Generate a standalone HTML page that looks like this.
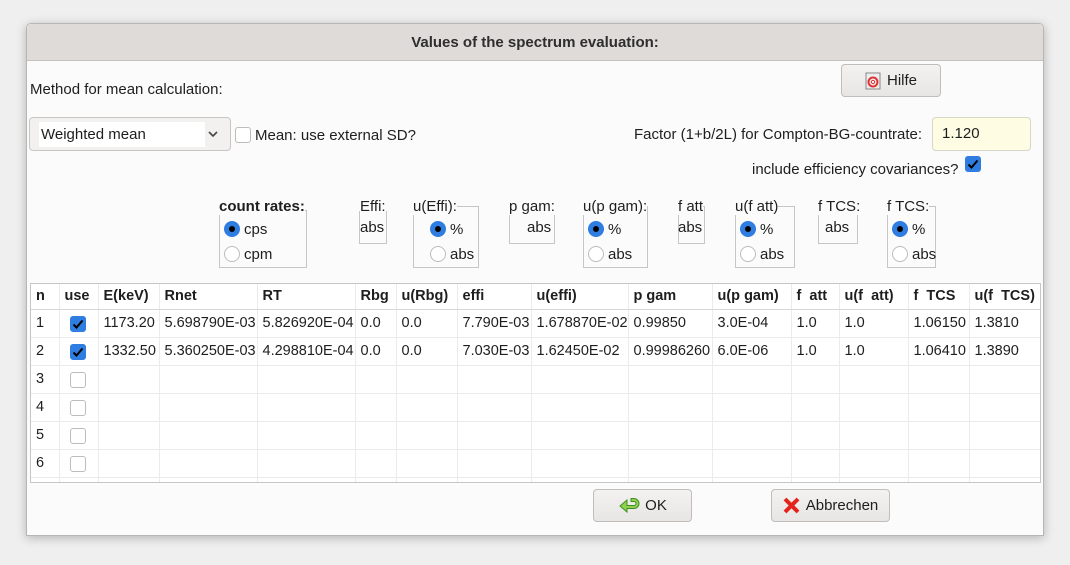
<!DOCTYPE html>
<html><head><meta charset="utf-8"><style>
*{box-sizing:border-box;margin:0;padding:0}
body{width:1070px;height:565px;background:#efefef;font-family:"Liberation Sans","DejaVu Sans",sans-serif;font-size:15px;color:#1e1e1e;position:relative;overflow:hidden}
.a{position:absolute;white-space:nowrap}
#dlg{position:absolute;left:26px;top:23px;width:1018px;height:513px;background:#fbfbfb;border:1px solid #b8b5b2;box-shadow:0 2px 10px rgba(0,0,0,.25);border-radius:5px 5px 0 0}
#title{position:absolute;left:0;top:0;width:100%;height:37px;background:#dedbd8;border-bottom:1px solid #c4c1be;border-radius:5px 5px 0 0;text-align:center;line-height:37px;font-weight:bold;color:#2e2e2e}
.btn{position:absolute;background:linear-gradient(#f3f2f1,#e8e6e4);border:1px solid #c0bdba;border-radius:4px;display:flex;align-items:center;justify-content:center}
.gb{position:absolute;border:1px solid #c8c6c4}
.rad{position:absolute;width:16px;height:16px;border-radius:50%;border:1px solid #bcbcbc;background:#fff}
.rad.on{background:#2f7de1;border-color:#2f7de1}
.rad.on::after{content:"";position:absolute;left:4px;top:4px;width:6px;height:6px;border-radius:50%;background:#000}
.cb{position:absolute;width:16px;height:16px;border-radius:3px;border:1px solid #bcbcbc;background:#fff}
.cb.on{background:#2f7de1;border-color:#2f7de1}
.cb.on svg{position:absolute;left:1px;top:2px}
#tw{position:absolute;left:30px;top:283px;width:1011px;height:200px;background:#fff;border:1px solid #c8c6c4;overflow:hidden}
table{border-collapse:collapse;table-layout:fixed;width:1010px}
td,th{border:1px solid #ebebeb;height:28px;padding:0 5px;text-align:left;font-size:14.5px;white-space:nowrap;overflow:hidden}
th{height:25px;font-weight:bold;border-bottom:1px solid #d8d8d8;border-top:0}
tr td:first-child,tr th:first-child{border-left:0}
</style></head><body>
<div id="dlg"><div id="title">Values of the spectrum evaluation:</div></div>

<div class="a" style="left:30px;top:81px">Method for mean calculation:</div>
<div class="btn" style="left:841px;top:64px;width:100px;height:33px">
<svg style="margin-right:6px" width="16" height="18" viewBox="0 0 16 18"><rect x="1" y="1" width="14" height="16" fill="#eee" stroke="#888"/><circle cx="8" cy="10" r="4.5" fill="none" stroke="#d33" stroke-width="2"/><circle cx="8" cy="10" r="1.6" fill="#fff" stroke="#d33"/></svg>
<span>Hilfe</span></div>

<div class="a" style="left:29px;top:117px;width:202px;height:34px;border:1px solid #c8c6c4;border-radius:4px;background:#f2f1f0"></div>
<div class="a" style="left:39px;top:122px;width:166px;height:25px;background:#fff;line-height:25px;padding-left:2px">Weighted mean</div>
<svg class="a" style="left:207px;top:130px" width="12" height="8" viewBox="0 0 12 8"><path d="M2 2l4 4 4-4" fill="none" stroke="#444" stroke-width="1.6"/></svg>
<div class="cb" style="left:235px;top:127px"></div>
<div class="a" style="left:255px;top:127px">Mean: use external SD?</div>

<div class="a" style="left:634px;top:126px">Factor (1+b/2L) for Compton-BG-countrate:</div>
<div class="a" style="left:932px;top:117px;width:99px;height:34px;background:#fefde4;border:1px solid #d8d6c8;border-radius:4px;line-height:32px;padding-left:9px">1.120</div>
<div class="a" style="left:752px;top:161px">include efficiency covariances?</div>
<div class="cb on" style="left:965px;top:156px"><svg width="12" height="11" viewBox="0 0 12 11"><path d="M1.5 5.5l3 3 6-7" fill="none" stroke="#000" stroke-width="2"/></svg></div>

<div class="gb" style="left:219px;top:210px;width:88px;height:58px"></div>
<div class="a" style="left:219px;top:198px;font-weight:bold;background:#fbfbfb">count rates:</div>
<div class="rad on" style="left:224px;top:221px"></div><div class="a" style="left:244px;top:221px">cps</div>
<div class="rad" style="left:224px;top:246px"></div><div class="a" style="left:244px;top:246px">cpm</div>

<div class="gb" style="left:359px;top:211px;width:28px;height:33px"></div>
<div class="a" style="left:360px;top:198px;background:#fbfbfb">Effi:</div>
<div class="a" style="left:360px;top:219px">abs</div>

<div class="gb" style="left:413px;top:206px;width:66px;height:62px"></div>
<div class="a" style="left:413px;top:198px;background:#fbfbfb">u(Effi):</div>
<div class="rad on" style="left:430px;top:221px"></div><div class="a" style="left:450px;top:221px">%</div>
<div class="rad" style="left:430px;top:246px"></div><div class="a" style="left:450px;top:246px">abs</div>

<div class="gb" style="left:509px;top:206px;width:46px;height:38px"></div>
<div class="a" style="left:509px;top:198px;background:#fbfbfb">p gam:</div>
<div class="a" style="left:527px;top:219px">abs</div>

<div class="gb" style="left:583px;top:206px;width:65px;height:62px"></div>
<div class="a" style="left:583px;top:198px;background:#fbfbfb">u(p gam):</div>
<div class="rad on" style="left:588px;top:221px"></div><div class="a" style="left:608px;top:221px">%</div>
<div class="rad" style="left:588px;top:246px"></div><div class="a" style="left:608px;top:246px">abs</div>

<div class="gb" style="left:678px;top:206px;width:27px;height:38px"></div>
<div class="a" style="left:678px;top:198px;background:#fbfbfb">f att</div>
<div class="a" style="left:678px;top:219px">abs</div>

<div class="gb" style="left:735px;top:206px;width:60px;height:62px"></div>
<div class="a" style="left:735px;top:198px;background:#fbfbfb">u(f att)</div>
<div class="rad on" style="left:740px;top:221px"></div><div class="a" style="left:760px;top:221px">%</div>
<div class="rad" style="left:740px;top:246px"></div><div class="a" style="left:760px;top:246px">abs</div>

<div class="gb" style="left:818px;top:206px;width:40px;height:38px"></div>
<div class="a" style="left:818px;top:198px;background:#fbfbfb">f TCS:</div>
<div class="a" style="left:825px;top:219px">abs</div>

<div class="gb" style="left:887px;top:206px;width:49px;height:62px"></div>
<div class="a" style="left:887px;top:198px;background:#fbfbfb">f TCS:</div>
<div class="rad on" style="left:892px;top:221px"></div><div class="a" style="left:912px;top:221px">%</div>
<div class="rad" style="left:892px;top:246px"></div><div class="a" style="left:912px;top:246px">abs</div>

<div id="tw"><table>
<colgroup><col style="width:28px"><col style="width:39px"><col style="width:61px"><col style="width:98px"><col style="width:98px"><col style="width:41px"><col style="width:61px"><col style="width:74px"><col style="width:97px"><col style="width:84px"><col style="width:79px"><col style="width:48px"><col style="width:69px"><col style="width:61px"><col style="width:72px"></colgroup>
<tr><th>n</th><th>use</th><th>E(keV)</th><th>Rnet</th><th>RT</th><th>Rbg</th><th>u(Rbg)</th><th>effi</th><th>u(effi)</th><th>p gam</th><th>u(p gam)</th><th>f&nbsp; att</th><th>u(f&nbsp; att)</th><th>f&nbsp; TCS</th><th>u(f&nbsp; TCS)</th></tr>
<tr><td>1</td><td style="position:relative"><div class="cb on" style="left:10px;top:6px"><svg width="12" height="11" viewBox="0 0 12 11"><path d="M1.5 5.5l3 3 6-7" fill="none" stroke="#000" stroke-width="2"/></svg></div></td><td>1173.20</td><td>5.698790E-03</td><td>5.826920E-04</td><td>0.0</td><td>0.0</td><td>7.790E-03</td><td>1.678870E-02</td><td>0.99850</td><td>3.0E-04</td><td>1.0</td><td>1.0</td><td>1.06150</td><td>1.3810</td></tr>
<tr><td>2</td><td style="position:relative"><div class="cb on" style="left:10px;top:6px"><svg width="12" height="11" viewBox="0 0 12 11"><path d="M1.5 5.5l3 3 6-7" fill="none" stroke="#000" stroke-width="2"/></svg></div></td><td>1332.50</td><td>5.360250E-03</td><td>4.298810E-04</td><td>0.0</td><td>0.0</td><td>7.030E-03</td><td>1.62450E-02</td><td>0.99986260</td><td>6.0E-06</td><td>1.0</td><td>1.0</td><td>1.06410</td><td>1.3890</td></tr>
<tr><td>3</td><td style="position:relative"><div class="cb" style="left:10px;top:6px"></div></td><td></td><td></td><td></td><td></td><td></td><td></td><td></td><td></td><td></td><td></td><td></td><td></td><td></td></tr>
<tr><td>4</td><td style="position:relative"><div class="cb" style="left:10px;top:6px"></div></td><td></td><td></td><td></td><td></td><td></td><td></td><td></td><td></td><td></td><td></td><td></td><td></td><td></td></tr>
<tr><td>5</td><td style="position:relative"><div class="cb" style="left:10px;top:6px"></div></td><td></td><td></td><td></td><td></td><td></td><td></td><td></td><td></td><td></td><td></td><td></td><td></td><td></td></tr>
<tr><td>6</td><td style="position:relative"><div class="cb" style="left:10px;top:6px"></div></td><td></td><td></td><td></td><td></td><td></td><td></td><td></td><td></td><td></td><td></td><td></td><td></td><td></td></tr>
<tr><td style="height:10px"></td><td></td><td></td><td></td><td></td><td></td><td></td><td></td><td></td><td></td><td></td><td></td><td></td><td></td><td></td></tr>
</table></div>

<div class="btn" style="left:593px;top:489px;width:99px;height:33px">
<svg style="margin-right:3px" width="24" height="18" viewBox="0 0 24 18"><path d="M9 3L2 9l7 6v-3.5h7a5 5 0 0 0 0-10h-3v3h3a2 2 0 0 1 0 4H9z" fill="#8fd14f" stroke="#3f8f1f" stroke-width="1"/></svg>
<span>OK</span></div>
<div class="btn" style="left:771px;top:489px;width:119px;height:33px">
<svg style="margin-right:6px" width="17" height="17" viewBox="0 0 17 17"><path d="M2 2L15 15M15 2L2 15" stroke="#e3241b" stroke-width="4"/></svg>
<span>Abbrechen</span></div>
</body></html>
